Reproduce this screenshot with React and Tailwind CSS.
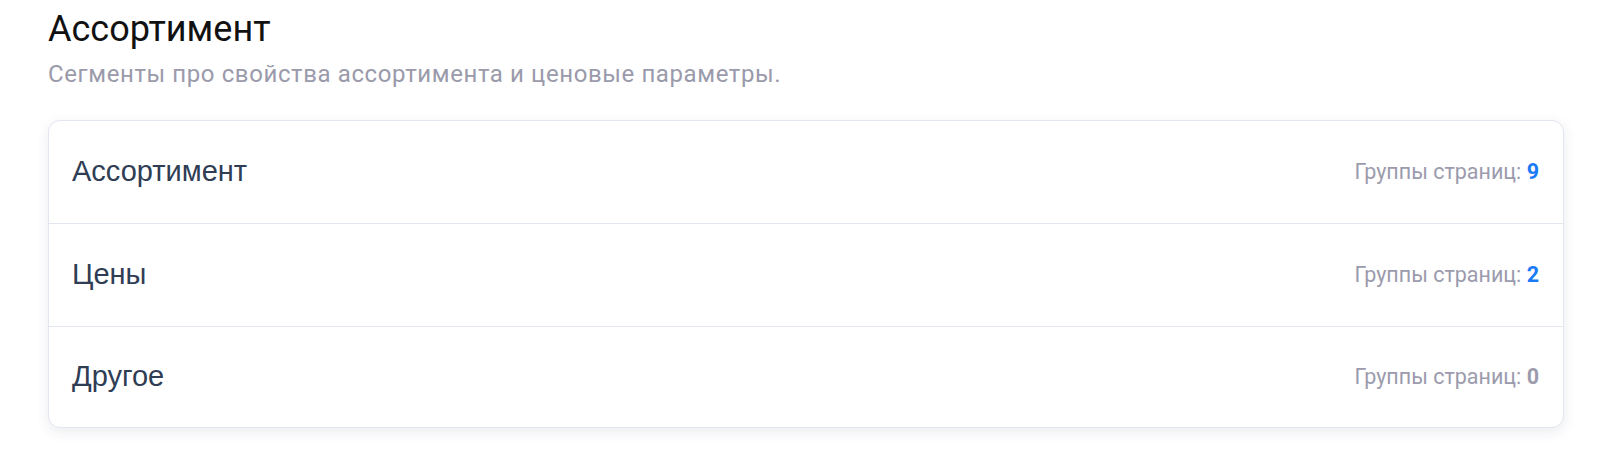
import React from 'react';

// Segment groups shown inside the card
const segments = [
  { title: 'Ассортимент', count: 9 },
  { title: 'Цены', count: 2 },
  { title: 'Другое', count: 0 },
];

const SegmentRow = ({ title, count, last }) => (
  <div
    className={`flex items-center justify-between pl-[23px] pr-[24px] ${
      last ? 'h-[100px]' : 'h-[103px] border-b border-[#e2e6ef]'
    }`}
  >
    <span className="font-['Liberation_Sans',Arial,sans-serif] text-[29px] text-[#2f3d55]">
      {title}
    </span>
    <span className="font-['Roboto',sans-serif] text-[21.5px] text-[#9b9bad]">
      Группы страниц:{' '}
      <span className={`font-bold ${count > 0 ? 'text-[#1a7af8]' : 'text-[#9b9bad]'}`}>
        {count}
      </span>
    </span>
  </div>
);

export default function App() {
  return (
    <div className="min-h-[450px] bg-white px-[48px] pt-[7px] pr-[36px]">
      {/* Header */}
      <h1 className="font-['Roboto',sans-serif] text-[36px] leading-[44px] text-[#111]">
        Ассортимент
      </h1>
      <p className="mt-[9px] font-['Roboto',sans-serif] text-[24px] leading-[28px] tracking-[0.6px] text-[#9a9aab]">
        Сегменты про свойства ассортимента и ценовые параметры.
      </p>

      {/* Segment list */}
      <div className="mt-[32px] rounded-[12px] border border-[#e2e6ef] bg-white shadow-[0_4px_14px_rgba(30,45,90,0.09)]">
        {segments.map((s, idx) => (
          <SegmentRow key={s.title} {...s} last={idx === segments.length - 1} />
        ))}
      </div>
    </div>
  );
}
